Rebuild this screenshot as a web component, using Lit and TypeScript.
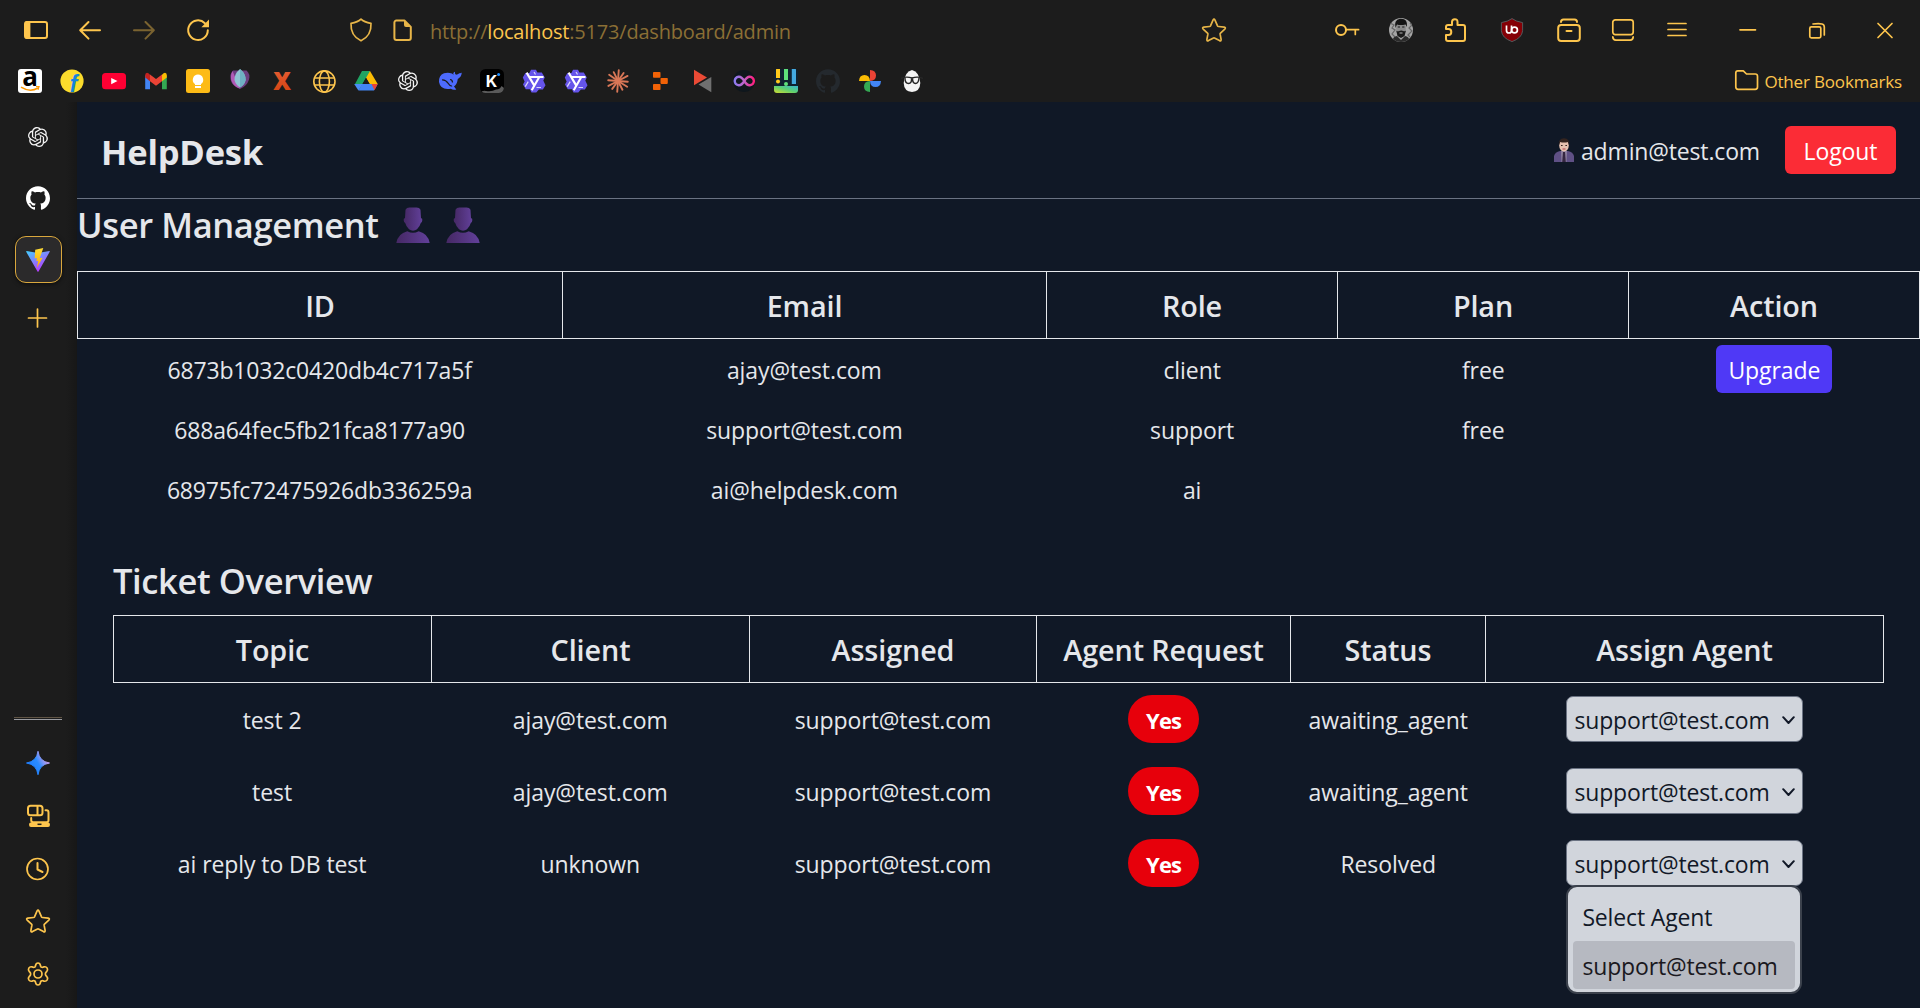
import { LitElement, html, css, svg } from "lit";
import { customElement, property } from "lit/decorators.js";

const OPENAI =
  "M22.2819 9.8211a5.9847 5.9847 0 0 0-.5157-4.9108 6.0462 6.0462 0 0 0-6.5098-2.9A6.0651 6.0651 0 0 0 4.9807 4.1818a5.9847 5.9847 0 0 0-3.9977 2.9 6.0462 6.0462 0 0 0 .7427 7.0966 5.98 5.98 0 0 0 .511 4.9107 6.051 6.051 0 0 0 6.5146 2.9001A5.9847 5.9847 0 0 0 13.2599 24a6.0557 6.0557 0 0 0 5.7718-4.2058 5.9894 5.9894 0 0 0 3.9977-2.9001 6.0557 6.0557 0 0 0-.7475-7.0729zm-9.022 12.6081a4.4755 4.4755 0 0 1-2.8764-1.0408l.1419-.0804 4.7783-2.7582a.7948.7948 0 0 0 .3927-.6813v-6.7369l2.02 1.1686a.071.071 0 0 1 .038.052v5.5826a4.504 4.504 0 0 1-4.4945 4.4944zm-9.6607-4.1254a4.4708 4.4708 0 0 1-.5346-3.0137l.142.0852 4.783 2.7582a.7712.7712 0 0 0 .7806 0l5.8428-3.3685v2.3324a.0804.0804 0 0 1-.0332.0615L9.74 19.9502a4.4992 4.4992 0 0 1-6.1408-1.6464zM2.3408 7.8956a4.485 4.485 0 0 1 2.3655-1.9728V11.6a.7664.7664 0 0 0 .3879.6765l5.8144 3.3543-2.0201 1.1685a.0757.0757 0 0 1-.071 0l-4.8303-2.7865A4.504 4.504 0 0 1 2.3408 7.872zm16.5963 3.8558L13.1038 8.364 15.1192 7.2a.0757.0757 0 0 1 .071 0l4.8303 2.7913a4.4944 4.4944 0 0 1-.6765 8.1042v-5.6772a.79.79 0 0 0-.407-.667zm2.0107-3.0231l-.142-.0852-4.7735-2.7818a.7759.7759 0 0 0-.7854 0L9.409 9.2297V6.8974a.0662.0662 0 0 1 .0284-.0615l4.8303-2.7866a4.4992 4.4992 0 0 1 6.6802 4.66zM8.3065 12.863l-2.02-1.1638a.0804.0804 0 0 1-.038-.0567V6.0742a4.4992 4.4992 0 0 1 7.3757-3.4537l-.142.0805L8.704 5.459a.7948.7948 0 0 0-.3927.6813zm1.0976-2.3654l2.602-1.4998 2.6069 1.4998v2.9994l-2.5974 1.4997-2.6067-1.4997Z";
const GITHUB =
  "M12 .297c-6.63 0-12 5.373-12 12 0 5.303 3.438 9.8 8.205 11.385.6.113.82-.258.82-.577 0-.285-.01-1.04-.015-2.04-3.338.724-4.042-1.61-4.042-1.61C4.422 18.07 3.633 17.7 3.633 17.7c-1.087-.744.084-.729.084-.729 1.205.084 1.838 1.236 1.838 1.236 1.07 1.835 2.809 1.305 3.495.998.108-.776.417-1.305.76-1.605-2.665-.3-5.466-1.332-5.466-5.93 0-1.31.465-2.38 1.235-3.22-.135-.303-.54-1.523.105-3.176 0 0 1.005-.322 3.3 1.23.96-.267 1.98-.399 3-.405 1.02.006 2.04.138 3 .405 2.28-1.552 3.285-1.23 3.285-1.23.645 1.653.24 2.873.12 3.176.765.84 1.23 1.91 1.23 3.22 0 4.61-2.805 5.625-5.475 5.92.42.36.81 1.096.81 2.22 0 1.606-.015 2.896-.015 3.286 0 .315.21.69.825.57C20.565 22.092 24 17.592 24 12.297c0-6.627-5.373-12-12-12";
const STAR =
  "M11 2.1q1-1.9 2 0l2.5 5.7q.3.6 1 .7l5.7.7q2 .4.6 1.9l-4.3 4q-.5.5-.4 1.1l1 5.2q.2 2-1.6 1.2l-5-2.7q-.5-.3-1 0l-5 2.7q-1.8.8-1.6-1.2l1-5.2q.1-.6-.4-1.1l-4.3-4q-1.4-1.5.6-1.9l5.7-.7q.7-.1 1-.7z";

const qwen = svg`
  <path d="M9 .8h5l1.400 2.600h4.400l3 5.200-1.500 3 2.200 4.600-2.600 4.200h-4l-2.600 3.200H9.500L8 20.200H3.800L1 15.500l1.600-3L.8 8.600 3.400 4h4z" fill="#6554ea"/>
  <path d="M7 8h14.500M17.300 8l-7.600 13.200M12.300 16.600 4.600 3.600" fill="none" stroke="#fff" stroke-width="2.100"/>
  <path d="M3.200 17.600l3-5M14.500 18.500h4.500M12 3l1.500 2.500" fill="none" stroke="#fff" stroke-width="1.200" opacity=".75"/>`;

const icons: Record<string, unknown> = {
  sidebar: svg`<rect x="1" y="4" width="22" height="16" rx="2" fill="none" stroke="currentColor" stroke-width="2"/><path d="M1 5q0-2 2-2h3.4v18H3q-2 0-2-2z" fill="currentColor"/>`,
  back: svg`<path class="l" d="M22 12.3H2.6M10.5 4 2.2 12.3l8.3 8.3"/>`,
  forward: svg`<path class="l" d="M2 12.3h19.4M13.5 4l8.3 8.3-8.3 8.3"/>`,
  reload: svg`<path class="l" d="M21.8 12.2a9.8 9.8 0 1 1-2.9-7"/><path d="M23 1.6v7.6h-7.6z" fill="currentColor"/>`,
  shield: svg`<path class="l t" d="M12 1.2c2 2 5.500 3.400 10 4.200C22.400 13 19 19.500 12 22.800 5 19.500 1.600 13 2 5.400c4.500-.8 8-2.200 10-4.200z"/>`,
  page: svg`<path class="l" d="M5.400 2.500h8l6.400 6.400v11.100a2 2 0 0 1-2 2H5.400a2 2 0 0 1-2-2V4.500a2 2 0 0 1 2-2z"/><path d="M13 2l7 7h-5q-2 0-2-2z" fill="currentColor"/>`,
  star: svg`<path class="l t" d="${STAR}"/>`,
  key: svg`<circle class="l" cx="6" cy="12" r="5"/><path class="l t" d="M11 11.700h12.600M20.300 12v4.500"/>`,
  avatar: svg`<defs><clipPath id="av"><circle cx="12" cy="12" r="12"/></clipPath></defs><g clip-path="url(#av)"><rect width="24" height="24" fill="#a5a5a5"/><path d="M1 5l4 2-2 3 3 2-3 4 3 3M21 5l2 2-3 3 3 3-4 4 2 2" stroke="#666" stroke-width="1.200" fill="none"/><ellipse cx="12" cy="10.500" rx="4.800" ry="7.500" fill="#8a8a8a"/><path d="M6.500 10Q4.500 2 11 .8q8-.8 7 8.200l-1.500-2.500q-5 1-8.500 0z" fill="#141414"/><path d="M8.800 9h2.200M13.200 9h2.200" stroke="#1a1a1a" stroke-width="1"/><path d="M7.200 12.500q1.300 1.500 3 .4 2-1 4 0 1.700 1 2.800-.4l-1.500 5.500-3.500 2-3.500-2z" fill="#1c1c1c"/><path d="M10.500 15h3" stroke="#c5c5c5" stroke-width=".9"/><path d="M3 24q1-6 5-6l4 4 4-4q4 0 5 6z" fill="#2c2c2c"/></g>`,
  puzzle: svg`<path class="l" d="M3 11V9q0-2 2-2h4V4q0-2.800 2.800-2.800T14.500 4v3H20q2 0 2 2v12q0 2-2 2H5q-2 0-2-2v-4h2.500q2.800 0 2.800-3T5.500 11z"/>`,
  ublock: svg`<path d="M12 .6q4 3 10.600 4v8.200Q22 20 12 23.600 2 20 1.400 12.800V4.600Q8 3.600 12 .6z" fill="#850006" stroke="#55585b" stroke-width="1"/><path d="M6.500 7.500v5q0 2.500 2.500 2.500t2.500-2.500v-5" fill="none" stroke="#fff" stroke-width="1.700"/><circle cx="14.500" cy="12" r="2.900" fill="none" stroke="#fff" stroke-width="1.700"/>`,
  archive: svg`<rect class="l" x="1.200" y="7" width="21.600" height="16" rx="3"/><path class="l" d="M9.500 13h5M4 4q0-2.500 2.500-2.500h11Q20 1.500 20 4"/>`,
  panel: svg`<rect class="l t" x="1.800" y="1.800" width="20.400" height="14.800" rx="2.500"/><path class="l t" d="M1.800 18.800q0 3.300 3 3.300h14.400q3 0 3-3.300"/>`,
  menu: svg`<path class="l t" d="M3 5.500h18M3 11.500h18M3 17.500h18"/>`,
  min: svg`<path class="l t" d="M4 11.800h15.500"/>`,
  restore: svg`<rect class="l t" x="4.800" y="8.800" width="11" height="11" rx="1.500"/><path class="l t" d="M8 6q6-.8 9 0 2.300.6 2.300 3v8"/>`,
  close: svg`<path class="l t" d="M5 5.500l14 14M19 5.500l-14 14"/>`,
  folder: svg`<path class="l t" d="M.8 4q0-2.200 2-2.200h5.500L11.500 5h8.700q2.300 0 2.300 2.300V18q0 2.300-2.300 2.300H3Q.8 20.300.8 18z"/>`,
  plus: svg`<path class="l t" d="M11.500 3v18M2.500 12h18"/>`,
  clock: svg`<circle class="l t" cx="11.500" cy="12" r="10.500"/><path class="l" d="M11.500 6v6.500l5 2.500"/>`,
  gear: svg`<path class="l t" d="M9.600 3.300Q10 1 12 1t2.400 2.300l.2.900q.2.700 1 .9.600.4 1.200.2l1.200-.4q2-.6 3.200 1.200 1 2-.5 3.500l-.8.800q-.5.500-.5 1.600t.5 1.600l.8.800q1.500 1.500.5 3.500-1.200 1.800-3.200 1.200l-1.200-.4q-.6-.2-1.200.2-.8.200-1 .9l-.2.900Q14 23 12 23t-2.400-2.300l-.2-.9q-.2-.7-1-.9-.6-.4-1.200-.2l-1.200.4q-2 .6-3.200-1.200-1-2 .5-3.500l.8-.8q.5-.5.5-1.600t-.5-1.600l-.8-.8q-1.500-1.500-.5-3.500Q4 4.300 6 4.900l1.200.4q.6.200 1.200-.2.800-.2 1-.9z"/><circle class="l t" cx="12" cy="12" r="4"/>`,
  devices: svg`<rect class="l" x="2" y="1.800" width="14.500" height="9.500" rx="2.500"/><path class="l" d="M11.500 2v9M5.200 14v2.200q0 2 2 2h13.300q2 0 2-2V8.500q0-2.200-2-2.200h-1"/><path d="M5 18.500h17q2 0 2 2.200t-2 2.300H5q-2 0-2-2.300t2-2.200z" fill="currentColor"/><path d="M11.500 20.300h4" stroke="#1c1c1c" stroke-width="1.500"/>`,
  gemini: svg`<defs><linearGradient id="gm" x1="0" y1=".8" x2="1" y2=".2"><stop offset=".1" stop-color="#1c7cff"/><stop offset=".5" stop-color="#2a8cff"/><stop offset=".8" stop-color="#b79cf0"/></linearGradient></defs><path d="M12 .3q1.300 10.200 11.500 11.700Q13.300 13.500 12 23.700 10.700 13.500.5 12 10.700 10.500 12 .3z" fill="url(#gm)" stroke="url(#gm)" stroke-width="1"/>`,
  vite: svg`<defs><linearGradient id="va" x1="0" y1="0" x2=".6" y2="1"><stop stop-color="#41d1ff"/><stop offset="1" stop-color="#bd34fe"/></linearGradient><linearGradient id="vb" x1="0" y1="0" x2="0" y2="1"><stop stop-color="#ffdd35"/><stop offset="1" stop-color="#ffa800"/></linearGradient></defs><path d="M.6 3 12 5l11.400-2Q24 3 23.700 3.800L12.500 23.600q-.5.700-1 0L.2 3.800Q0 3 .6 3z" fill="url(#va)"/><path d="M17.300.1 9.200 1.700 8.700 10.400 11 9.900 10.300 13.200l2-.5-1.500 7.300 5.800-10.200-2.900.5L17.300.1z" fill="url(#vb)"/>`,
  openai: svg`<path fill="#f4f4f4" transform="translate(2 2) scale(.833)" d="${OPENAI}"/>`,
  github: svg`<path fill="#fff" d="${GITHUB}"/>`,
  githubDark: svg`<path fill="#24292e" d="${GITHUB}"/>`,
  amazon: svg`<rect width="24" height="24" rx="3" fill="#fff"/><text x="12" y="16.500" font-size="26" font-weight="700" text-anchor="middle" fill="#000" font-family="Open Sans, sans-serif">a</text><path d="M3 18.200q9 5.500 17 .8" fill="none" stroke="#ff9900" stroke-width="1.500"/><path d="M18 17.700h3l-1 3" fill="none" stroke="#ff9900" stroke-width="1.200"/>`,
  flipkart: svg`<defs><clipPath id="fk"><circle cx="12" cy="12" r="11.600"/></clipPath></defs><circle cx="12" cy="12" r="11.600" fill="#fbdc2c"/><g clip-path="url(#fk)"><text x="13.500" y="23" font-size="23" font-weight="700" font-style="italic" text-anchor="middle" fill="#1583dc" font-family="Liberation Sans, sans-serif">f</text></g>`,
  youtube: svg`<rect y="4" width="24" height="16.200" rx="3.500" fill="#ff0033"/><path d="M9.200 8.900v6.400L15.500 12z" fill="#fff"/>`,
  gmail: svg`<path d="M1.200 6v14.200h4.800v-9z" fill="#4285f4"/><path d="M22.800 6v14.200H18v-9z" fill="#34a853"/><path d="M18 5.800v6.400l4.800-3.700V6q0-2-1.800-2.200-1.300 0-3 2z" fill="#fbbc04"/><path d="M1.200 8.500V6q0-2 1.800-2.200 1.300 0 3 2v6.400z" fill="#c5221f"/><path d="M6 5.500 12 10l6-4.500v6.700l-6 4.500-6-4.500z" fill="#ea4335"/>`,
  keep: svg`<rect width="24" height="24" rx="2.500" fill="#fdbb16"/><path d="M12 5.500a5.300 5.300 0 0 1 3 9.600V16H9v-.9a5.300 5.300 0 0 1 3-9.600zM9 17h6v2H9z" fill="#fff"/>`,
  fox: svg`<path d="M5 1.500Q1.500 5 2.600 10.500 4 17 12 20q7-3 9-9.500Q22.500 5 18.500 1.500z" fill="#6c3d80"/><path d="M4.500 2q-2.500 5-1 10 2.500 6 8.500 7.500z" fill="#b15bb5"/><path d="M12 0Q6 5 6.500 11 7.500 16 12 18.500 16.700 16 17.600 11 18 5 12 0z" fill="#8fc4d3"/><path d="M12 0v18.500Q16.700 16 17.600 11 18 5 12 0z" fill="#6fafc3"/>`,
  xmark: svg`<defs><linearGradient id="xg" x1="0" y1="0" x2="0" y2="1"><stop stop-color="#e8623a"/><stop offset="1" stop-color="#d23f0c"/></linearGradient></defs><text x="12" y="21" font-size="24.500" font-weight="800" text-anchor="middle" fill="url(#xg)" font-family="Open Sans, sans-serif">X</text>`,
  globe: svg`<g fill="none" stroke="#fdc54d" stroke-width="1.600"><circle cx="12.400" cy="12.500" r="10.600"/><ellipse cx="12.400" cy="12.500" rx="5" ry="10.600"/><path d="M2.200 9h20.400M2.200 16h20.400"/></g>`,
  drive: svg`<path d="M8 2h8l7.700 13h-8z" fill="#fbbc04"/><path d="M8 2h8L5 21 1 15z" fill="#1fa463"/><path d="M8 15h15.700L20 21.500H4.500z" fill="#4285f4"/><path d="M17.500 15h6.200L20.500 21.200z" fill="#ea4335"/><path d="M12 8.800 8.500 15h7z" fill="#1c1c1c"/><path d="M.2 15h8.200l-4 6.500z" fill="#4a8df8"/>`,
  deepseek: svg`<path d="M1 13Q.6 6.500 6 4.300q4-1.300 8 .2 1 .5 1.500 1.500Q14.600 3.500 17 2.800q-.5 2 1 3 2-.1 3.300-1.500 2 .2 2.500-.8-.4 4.500-4 6.500-.8 5.500-3.800 7.600l2.300 2.800q-3 1.200-5.500-.7Q2.500 21.500 1 13z" fill="#4d6bfe"/><path d="M4 11q3.500-.4 6 3.200t4 2.600M12 10.500q2.500.2 2.500 3" fill="none" stroke="#1c1c1c" stroke-width="1.200"/>`,
  kimi: svg`<defs><clipPath id="km"><rect width="24" height="24" rx="5.500"/></clipPath></defs><g clip-path="url(#km)"><rect width="24" height="24" fill="#000"/><path d="M1 24q1-3 5-2Q12 23 16 20.500q4 0 5.500-3.500L24 19v5z" fill="#5a5a5a"/></g><text x="11.500" y="17.500" font-size="16" font-weight="700" text-anchor="middle" fill="#fff" font-family="Inter, sans-serif">K</text><circle cx="18.600" cy="5.600" r="1.500" fill="#1f8fff"/>`,
  qwen,
  claude: svg`<g stroke="#d97757" stroke-width="1.900" stroke-linecap="round">${[0, 31, 58, 90, 118, 149, 180, 212, 239, 270, 301, 330].map(
    (a, i) => svg`<path d="M12 12V${i % 2 ? 2.2 : 1.2}" transform="rotate(${a + 4} 12 12)"/>`
  )}</g>`,
  replit: svg`<g fill="#f26207"><rect x="5" y="3" width="7.500" height="5.800" rx=".8"/><rect x="12.500" y="9" width="7.300" height="5.900" rx=".8"/><rect x="5" y="15.100" width="7.500" height="5.900" rx=".8"/></g>`,
  triangles: svg`<path d="M4 .7v15.600L17 8.600z" fill="#ea4a35"/><path d="M21.300 8v15.200L8.500 15.500z" fill="#707070"/>`,
  infinity: svg`<defs><linearGradient id="nf"><stop stop-color="#8d7bf0"/><stop offset=".5" stop-color="#c063c8"/><stop offset="1" stop-color="#ff1e7c"/></linearGradient></defs><circle cx="12" cy="12" r="11" fill="#0f171d"/><path d="M12.300 12Q9.500 7.500 6.800 7.700 3 8.200 2.700 12q.3 3.800 4.100 4.300 2.700.2 5.500-4.300t5.500-4.300q3.800.5 4.100 4.300-.3 3.800-4.100 4.300-2.700.2-5.500-4.300z" fill="none" stroke="url(#nf)" stroke-width="2.400"/>`,
  bars: svg`<defs><linearGradient id="bg" x1="0" x2="1" y1="1" y2="0"><stop stop-color="#d4dc2f"/><stop offset=".5" stop-color="#5fd06f"/><stop offset="1" stop-color="#36b6cf"/></linearGradient><clipPath id="bc"><rect width="24" height="24" rx="3"/></clipPath></defs><g clip-path="url(#bc)"><rect width="24" height="24" fill="#0f2130"/><rect y="17" width="24" height="7" fill="url(#bg)"/><path d="M2 0h4v9H2z" fill="#ffc91b"/><circle cx="4" cy="12.500" r="2" fill="#ffc91b"/><path d="M10 0h4v11h-4z" fill="#5ee07a"/><circle cx="12" cy="15" r="2" fill="#5ee07a"/><path d="M17.800 0H22v15h-4.200z" fill="#43a9e0"/></g>`,
  photos: svg`<path d="M12 1q6 .3 6 5.500T12 12z" fill="#ea4335"/><path d="M23 12q-.3 6-5.500 6T12 12z" fill="#4285f4"/><path d="M12 23q-6-.3-6-5.500T12 12z" fill="#34a853"/><path d="M1 12q.3-6 5.500-6T12 12z" fill="#fbbc04"/>`,
  egg: svg`<path d="M12 1Q19.500 3 20.300 14 20 22.500 12 23 4 22.500 3.700 14 4.500 3 12 1z" fill="#f5f5f5"/><path d="M1 9.500q5-2.500 11-.5 6-2 11 .5M5 9q0 5.500 3.500 5.500T11.500 9M12.500 9q0 5.500 3 5.500T19 9" fill="none" stroke="#262626" stroke-width="1.400"/>`,
};

@customElement("ui-icon")
class UiIcon extends LitElement {
  @property() name = "";
  static styles = css`
    :host { display: block; width: 24px; height: 24px; flex: none; }
    svg { display: block; overflow: visible; width: 100%; height: 100%; }
    .l { fill: none; stroke: currentColor; stroke-width: 2; stroke-linecap: round; stroke-linejoin: round; }
    .t { stroke-width: 1.7; }
  `;
  render() {
    return html`<svg viewBox="0 0 24 24">${icons[this.name]}</svg>`;
  }
}

@customElement("browser-bar")
class BrowserBar extends LitElement {
  static styles = css`
    :host { display: block; height: 102px; background: #1c1c1c; color: #fdc54d; font-family: "Open Sans", "Noto Sans", sans-serif; }
    .row { display: flex; align-items: center; }
    .tools { height: 60px; padding-left: 24px; }
    .nav { display: flex; gap: 30px; }
    .dim { opacity: 0.42; }
    .address { display: flex; align-items: center; width: 877px; margin-left: 139px; color: #e7b548; }
    .page { margin-left: 18px; }
    .url { flex: 1; margin-left: 15px; padding-top: 3px; font-size: 20px; letter-spacing: -0.2px; line-height: 28px; color: #8b6f35; white-space: nowrap; }
    .url b { font-weight: 400; color: #fdc54d; }
    .actions { display: flex; margin-left: 109px; }
    .g30 { margin-left: 30px; }
    .g33 { margin-left: 33px; }
    .g45 { margin-left: 45px; }
    .g44 { margin-left: 44px; }
    .g47 { margin-left: 47px; }
    .marks { height: 42px; padding: 0 18px; gap: 18px; }
    .other { display: flex; align-items: center; margin-left: auto; gap: 5px; font-size: 17px; letter-spacing: -0.17px; line-height: 24px; white-space: nowrap; }
    .label { padding-top: 1px; }
  `;
  render() {
    const marks = ["amazon", "flipkart", "youtube", "gmail", "keep", "fox", "xmark", "globe", "drive", "openai", "deepseek", "kimi", "qwen", "qwen", "claude", "replit", "triangles", "infinity", "bars", "githubDark", "photos", "egg"];
    return html`
      <div class="row tools">
        <div class="nav">
          <ui-icon name="sidebar"></ui-icon>
          <ui-icon name="back"></ui-icon>
          <ui-icon class="dim" name="forward"></ui-icon>
          <ui-icon name="reload"></ui-icon>
        </div>
        <div class="address">
          <ui-icon name="shield"></ui-icon>
          <ui-icon class="page" name="page"></ui-icon>
          <div class="url">http://<b>localhost</b>:5173/dashboard/admin</div>
          <ui-icon name="star"></ui-icon>
        </div>
        <div class="actions">
          <ui-icon name="key"></ui-icon>
          <ui-icon class="g30" name="avatar"></ui-icon>
          <ui-icon class="g30" name="puzzle"></ui-icon>
          <ui-icon class="g33" name="ublock"></ui-icon>
          <ui-icon class="g33" name="archive"></ui-icon>
          <ui-icon class="g30" name="panel"></ui-icon>
          <ui-icon class="g30" name="menu"></ui-icon>
          <ui-icon class="g47" name="min"></ui-icon>
          <ui-icon class="g45" name="restore"></ui-icon>
          <ui-icon class="g44" name="close"></ui-icon>
        </div>
      </div>
      <div class="row marks">
        ${marks.map((m) => html`<ui-icon name=${m}></ui-icon>`)}
        <div class="other"><ui-icon name="folder"></ui-icon><span class="label">Other Bookmarks</span></div>
      </div>
    `;
  }
}

@customElement("side-rail")
class SideRail extends LitElement {
  static styles = css`
    :host { display: flex; flex-direction: column; justify-content: space-between; box-sizing: border-box; width: 77px; padding: 23px 0 22px; color: #fdc54d; background: linear-gradient(90deg, #1c1c1c 66px, #171717 77px); }
    .group { display: flex; flex-direction: column; align-items: center; width: 76px; }
    .top { gap: 23px; }
    .hub { margin: 14px 0 3px; }
    .active { display: flex; align-items: center; justify-content: center; box-sizing: border-box; width: 47px; height: 47px; border: 1.5px solid #d9a73d; border-radius: 11px; background: #2b2a2b; box-shadow: 0 1px 4px #0009; }
    .bottom { gap: 28.75px; }
    .divider { width: 48px; height: 1px; margin-bottom: 2px; border-top: 1px solid #5f5445; border-bottom: 1px solid #9a9ba0; }
  `;
  render() {
    return html`
      <div class="group top">
        <ui-icon name="openai"></ui-icon>
        <ui-icon class="hub" name="github"></ui-icon>
        <div class="active"><ui-icon name="vite"></ui-icon></div>
        <ui-icon name="plus"></ui-icon>
      </div>
      <div class="group bottom">
        <div class="divider"></div>
        <ui-icon name="gemini"></ui-icon>
        <ui-icon name="devices"></ui-icon>
        <ui-icon name="clock"></ui-icon>
        <ui-icon name="star"></ui-icon>
        <ui-icon name="gear"></ui-icon>
      </div>
    `;
  }
}

@customElement("help-desk")
class HelpDesk extends LitElement {
  static styles = css`
    :host { display: block; background: #101826; color: #e5e7eb; font-family: "Open Sans", "Noto Sans", sans-serif; font-size: 23px; letter-spacing: -0.08px; line-height: 36px; white-space: nowrap; }
    .header { display: flex; align-items: center; justify-content: space-between; height: 96px; padding: 0 24px; border-bottom: 1px solid #6a7282; }
    .brand { padding-top: 3px; font-size: 34.5px; font-weight: 700; letter-spacing: -0.2px; }
    .account { display: flex; align-items: center; }
    .person { width: 20px; height: 24px; margin-right: 7px; }
    .mail { margin-right: 25px; padding-top: 2px; letter-spacing: -0.15px; }
    .btn { box-sizing: border-box; height: 48px; padding-top: 7px; border-radius: 6px; color: #fff; text-align: center; }
    .logout { width: 111px; background: #fb2c36; }
    .upgrade { width: 116px; background: #4f39f6; }
    .title { display: flex; align-items: center; height: 48px; font-size: 34.5px; font-weight: 600; letter-spacing: -0.38px; }
    .title span { padding-top: 3px; }
    .users-title { margin-bottom: 24px; }
    .bust { width: 34px; height: 36px; margin: 4px 0 0 17px; }
    .bust + .bust { margin-left: 16px; }
    .tickets { padding: 36px 36px 0; }
    .tickets-title { margin-bottom: 12px; }
    .head { border: solid #e5e7eb; border-width: 1px 0 1px 1px; font-size: 28.75px; font-weight: 600; letter-spacing: -0.1px; }
    .grid { display: grid; }
    .user-grid { grid-template-columns: 485fr 484fr 291fr 291fr 291fr; }
    .ticket-grid { grid-template-columns: 318fr 318fr 287fr 254fr 195fr 398fr; }
    .th { height: 66px; padding-top: 2px; box-sizing: border-box; border-right: 1px solid #e5e7eb; line-height: 64px; text-align: center; }
    .row { align-items: center; justify-items: center; }
    .user-row { height: 60px; }
    .ticket-row { height: 72px; }
    .cell { padding-top: 1px; }
    .id { letter-spacing: -0.17px; }
    .pill { box-sizing: border-box; width: 71px; height: 48px; padding-top: 7px; border-radius: 24px; background: #e7000b; color: #fff; font-size: 22px; font-weight: 700; letter-spacing: -0.9px; text-align: center; }
    .select { position: relative; display: flex; align-items: center; box-sizing: border-box; width: 237px; height: 46px; padding-left: 7px; border: 1px solid #6a7282; border-radius: 7px; background: #d1d5dc; color: #111827; letter-spacing: -0.15px; }
    .value { flex: 1; padding-top: 2px; }
    .chev { width: 13px; height: 9px; margin: 2px 7px 0 0; }
    .popup { position: absolute; top: 44px; left: -1px; box-sizing: border-box; width: 236px; height: 109px; padding: 5px; border: 2px solid #3b414c; border-radius: 11px; background: #d1d5dc; }
    .option { box-sizing: border-box; height: 48px; padding: 7px 0 0 9px; border-radius: 4px; }
    .option + .option { margin-top: 1px; }
    .current { background: #b6b9c1; color: #1a1820; }
  `;
  private bust = html`<svg class="bust" viewBox="0 0 34 38" preserveAspectRatio="none"><defs><linearGradient id="b"><stop stop-color="#452864"/><stop offset="1" stop-color="#62409a"/></linearGradient></defs><path d="M9.500 3q1-2.500 4-2.500h7q3 0 4 2.500l.5 9q1.500-.5 1.300 2-.3 3-1.500 3-1 4-3.800 6.500-4 3-8 0Q10.200 21 9.200 17q-1.200 0-1.500-3-.2-2.500 1.300-2z" fill="url(#b)"/><path d="M.3 38q1.500-10 11-12.500 5.700 3.500 11.400 0 9.500 2.500 11 12.500z" fill="url(#b)"/></svg>`;
  private users = [
    { id: "6873b1032c0420db4c717a5f", email: "ajay@test.com", role: "client", plan: "free", up: true },
    { id: "688a64fec5fb21fca8177a90", email: "support@test.com", role: "support", plan: "free", up: false },
    { id: "68975fc72475926db336259a", email: "ai@helpdesk.com", role: "ai", plan: "", up: false },
  ];
  private tickets = [
    { topic: "test 2", client: "ajay@test.com", status: "awaiting_agent", open: false },
    { topic: "test", client: "ajay@test.com", status: "awaiting_agent", open: false },
    { topic: "ai reply to DB test", client: "unknown", status: "Resolved", open: true },
  ];
  render() {
    return html`
      <div class="header">
        <div class="brand">HelpDesk</div>
        <div class="account">
          <svg class="person" viewBox="0 0 20 24"><path d="M0 24v-6q1-4 6-5h8q5 1 6 5v6z" fill="#5f5085"/><path d="M7 12.500h6L12.500 24h-5z" fill="#8f82a0"/><path d="M9 14h2l.8 10H8.200z" fill="#352641"/><ellipse cx="10" cy="7.500" rx="4.800" ry="6" fill="#e8c2b0"/><path d="M4.800 7.500Q4 .5 10 .3q6 .2 5.200 7.200L14 4Q10 5 6 4z" fill="#34241f"/><path d="M7 7.500h1.600M11.400 7.500H13" stroke="#35241f"/><path d="M8.500 11h3" stroke="#b0454c"/></svg>
          <div class="mail">admin@test.com</div>
          <div class="btn logout">Logout</div>
        </div>
      </div>
      <div class="title users-title"><span>User Management</span>${this.bust}${this.bust}</div>
      <div class="grid user-grid head">
        ${["ID", "Email", "Role", "Plan", "Action"].map((h) => html`<div class="th">${h}</div>`)}
      </div>
      ${this.users.map(
        (u) => html`<div class="grid user-grid row user-row">
          <div class="cell id">${u.id}</div>
          <div class="cell">${u.email}</div>
          <div class="cell">${u.role}</div>
          <div class="cell">${u.plan}</div>
          ${u.up ? html`<div class="btn upgrade">Upgrade</div>` : ""}
        </div>`
      )}
      <div class="tickets">
        <div class="title tickets-title"><span>Ticket Overview</span></div>
        <div class="grid ticket-grid head">
          ${["Topic", "Client", "Assigned", "Agent Request", "Status", "Assign Agent"].map((h) => html`<div class="th">${h}</div>`)}
        </div>
        ${this.tickets.map(
          (t) => html`<div class="grid ticket-grid row ticket-row">
            <div class="cell">${t.topic}</div>
            <div class="cell">${t.client}</div>
            <div class="cell">support@test.com</div>
            <div class="pill">Yes</div>
            <div class="cell">${t.status}</div>
            <div class="select">
              <span class="value">support@test.com</span>
              <svg class="chev" viewBox="0 0 13 9"><path d="M1.200 1.200 6.500 7l5.300-5.800" fill="none" stroke="#111827" stroke-width="2" stroke-linecap="round" stroke-linejoin="round"/></svg>
              ${t.open
                ? html`<div class="popup"><div class="option">Select Agent</div><div class="option current">support@test.com</div></div>`
                : ""}
            </div>
          </div>`
        )}
      </div>
    `;
  }
}

@customElement("app-root")
class AppRoot extends LitElement {
  static styles = css`
    :host { display: flex; flex-direction: column; width: 1920px; height: 1008px; overflow: hidden; background: #1c1c1c; }
    .body { display: flex; flex: 1; min-height: 0; }
    .main { flex: 1; min-width: 0; }
  `;
  render() {
    return html`<browser-bar></browser-bar>
      <div class="body"><side-rail></side-rail><help-desk class="main"></help-desk></div>`;
  }
}
